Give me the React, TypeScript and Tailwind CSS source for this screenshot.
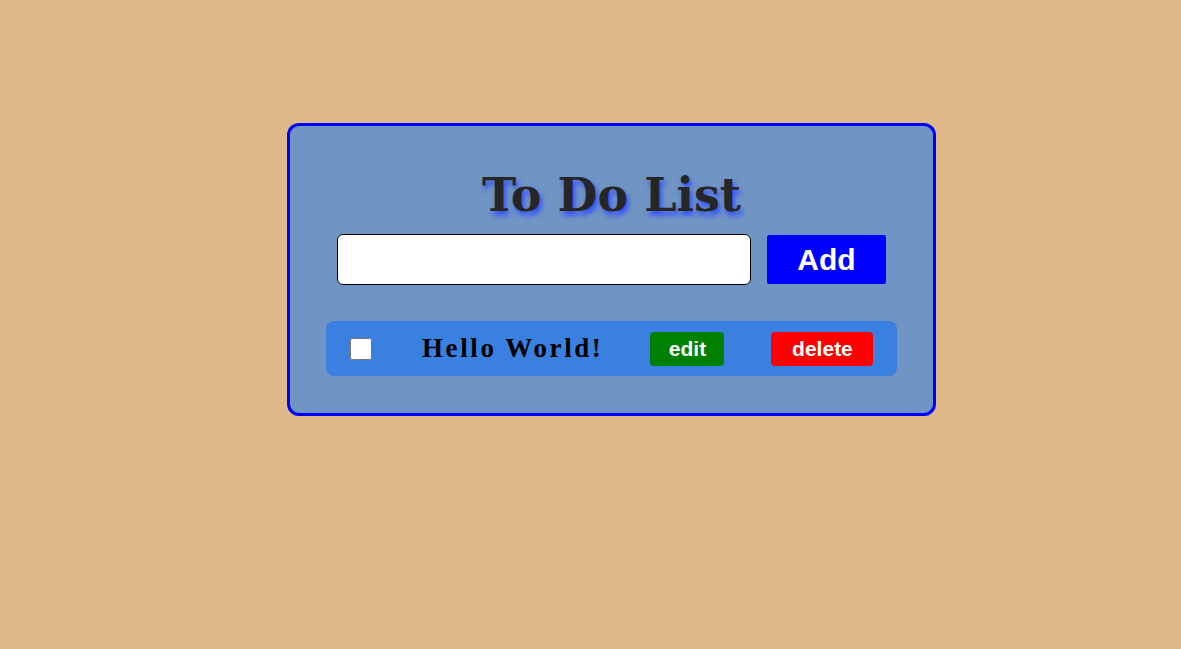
import React from "react";

export default function App() {
  return (
    <div className="min-h-[649px] w-full bg-[#deb887] pt-[123px] pl-[287px]">
      <div className="flex h-[293px] w-[649px] flex-col items-center rounded-[12px] border-[3px] border-[#0000ff] bg-[#7094c4]">
        <h1
          className="mt-[39px] font-bold leading-[60px] text-[#262626] [text-shadow:2px_4px_5px_#2f4dff]"
          style={{ fontFamily: '"DejaVu Serif", "Liberation Serif", serif', fontSize: 46 }}
        >
          To Do List
        </h1>
        <div className="mt-[9px] flex items-center gap-[16px]">
          <input
            type="text"
            className="h-[51px] w-[414px] rounded-[6px] border border-black bg-white px-2 outline-none"
          />
          <button
            className="h-[49px] w-[119px] rounded-[2px] bg-[#0000ff] text-[30px] font-bold text-white"
            style={{ fontFamily: '"Liberation Sans", Arial, sans-serif' }}
          >
            Add
          </button>
        </div>
        <div className="mt-[36px] flex h-[55px] w-[571px] items-center rounded-[8px] bg-[#3a80e0] pl-[24px]">
          <input type="checkbox" className="h-[22px] w-[22px] rounded-[4px]" />
          <span
            className="ml-[50px] text-[27px] font-bold tracking-[2.6px] text-black"
            style={{ fontFamily: '"Liberation Serif", serif' }}
          >
            Hello World!
          </span>
          <button
            className="ml-[47px] h-[34px] w-[74px] rounded-[4px] bg-[#008000] text-[21px] font-bold text-white"
            style={{ fontFamily: '"Liberation Sans", Arial, sans-serif' }}
          >
            edit
          </button>
          <button
            className="ml-[47px] h-[34px] w-[102px] rounded-[4px] bg-[#ff0000] text-[21px] font-bold text-white"
            style={{ fontFamily: '"Liberation Sans", Arial, sans-serif' }}
          >
            delete
          </button>
        </div>
      </div>
    </div>
  );
}
